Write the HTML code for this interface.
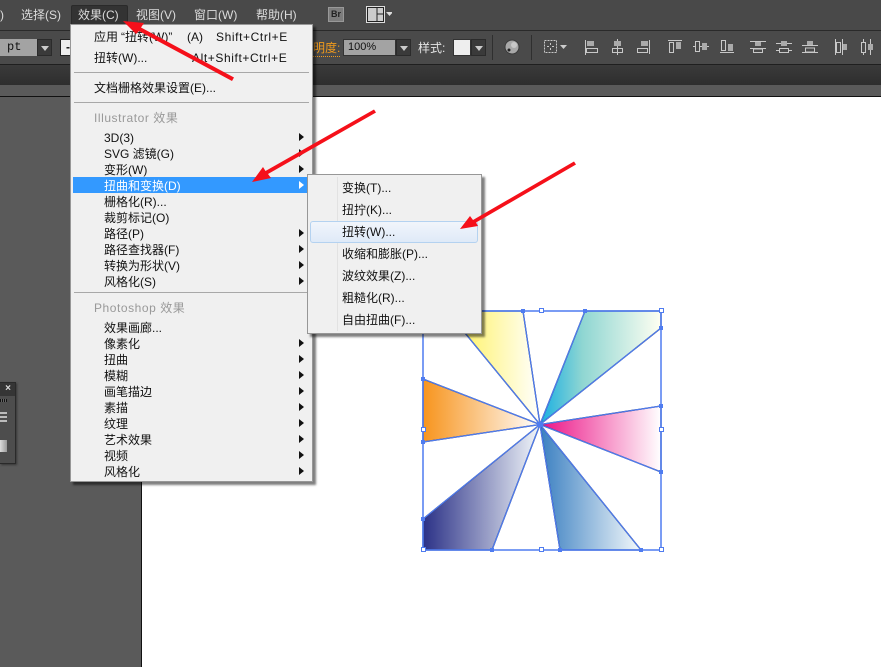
<!DOCTYPE html>
<html>
<head>
<meta charset="utf-8">
<style>
html,body{margin:0;padding:0;width:881px;height:667px;overflow:hidden;background:#5a5a5a}
body{position:relative;font:12px "Liberation Sans","WenQuanYi Zen Hei","Noto Sans CJK SC",sans-serif;color:#111}
div{position:absolute;box-sizing:border-box}
.t{white-space:nowrap;line-height:16px;height:16px}
.mb{color:#dcdcdc;top:7px}
.g{color:#999;letter-spacing:.55px}
.w{letter-spacing:.6px}
.l{color:#e4e4e4}
.sep{left:3px;width:235px;height:1px;background:#a8a8a8}
.ar{left:228px;width:0;height:0;border-left:5px solid #111;border-top:4px solid transparent;border-bottom:4px solid transparent}
.dd{background:#3a3a3a;border:1px solid #2b2b2b}
.dd:after{content:"";position:absolute;left:3px;top:6px;border-left:4px solid transparent;border-right:4px solid transparent;border-top:5px solid #ccc}
</style>
</head>
<body>
<!-- top chrome -->
<div style="left:0;top:0;width:881px;height:30px;background:#494949"></div>
<div style="left:0;top:30px;width:881px;height:1px;background:#2a2a2a"></div>
<div style="left:0;top:31px;width:881px;height:33px;background:#4a4a4a"></div>
<div style="left:0;top:64px;width:881px;height:1px;background:#1f1f1f"></div>
<div style="left:0;top:65px;width:881px;height:20px;background:linear-gradient(#3a3a3a,#2e2e2e)"></div>
<div style="left:0;top:85px;width:881px;height:11px;background:#5a5a5a"></div>
<div style="left:0;top:96px;width:881px;height:1px;background:#111"></div>
<!-- canvas -->
<div style="left:141px;top:97px;width:1px;height:570px;background:#111"></div>
<div style="left:142px;top:97px;width:739px;height:570px;background:#fff"></div>

<!-- menu bar -->
<div class="t mb" style="left:0">)</div>
<div class="t mb" style="left:21px">选择(S)</div>
<div style="left:71px;top:5px;width:57px;height:19px;background:#333;border:1px solid #2a2a2a;border-bottom:0;border-radius:2px 2px 0 0"></div>
<div class="t mb" style="left:78px">效果(C)</div>
<div class="t mb" style="left:136px">视图(V)</div>
<div class="t mb" style="left:194px">窗口(W)</div>
<div class="t mb" style="left:256px">帮助(H)</div>
<div style="left:328px;top:7px;width:16px;height:15px;background:#7d7d7d;border:1px solid #999;color:#222;font:bold 9px/13px 'Liberation Sans',sans-serif;text-align:center">Br</div>
<svg style="position:absolute;left:366px;top:6px" width="26" height="18"><rect x="1.500" y="1.500" width="16" height="14" fill="#ccc" stroke="#222" stroke-width="1"/><rect x="0.500" y="0.500" width="18" height="16" fill="none" stroke="#ddd"/><path d="M11 2v13M11 8h6" stroke="#222"/><path d="M20 6h7l-3.500 4z" fill="#ddd"/></svg>

<!-- control bar -->
<div style="left:0;top:39px;width:37px;height:17px;background:#a3a3a3;font:12px/17px 'Liberation Mono',monospace;color:#111;padding-left:7px">pt</div>
<div class="dd" style="left:37px;top:39px;width:15px;height:17px"></div>
<div style="left:60px;top:39px;width:30px;height:17px;background:#eee;border:1px solid #222;font:bold 12px/14px 'Liberation Sans',sans-serif;padding-left:5px">-</div>
<div class="t" style="left:313px;top:40px;color:#f09a1c;border-bottom:1px dotted #f09a1c;height:17px">明度:</div>
<div style="left:343px;top:39px;width:53px;height:17px;background:#a3a3a3;border:1px solid #333;font:11px/15px 'Liberation Sans',sans-serif;color:#111;padding-left:4px">100%</div>
<div class="dd" style="left:396px;top:39px;width:15px;height:17px"></div>
<div class="t l" style="left:418px;top:40px">样式:</div>
<div style="left:453px;top:39px;width:18px;height:17px;background:#eee;border:1px solid #333"></div>
<div class="dd" style="left:471px;top:39px;width:15px;height:17px"></div>
<div style="left:492px;top:35px;width:1px;height:25px;background:#2f2f2f"></div>
<div style="left:531px;top:35px;width:1px;height:25px;background:#2f2f2f"></div>
<svg style="position:absolute;left:504px;top:39px" width="16" height="16"><circle cx="8" cy="8" r="7" fill="#a8a8a8" stroke="#3a3a3a"/><circle cx="10" cy="6" r="3" fill="#c8c8c8"/><circle cx="5" cy="11" r="1.500" fill="#222"/></svg>
<svg style="position:absolute;left:0;top:0" width="881" height="64" fill="none" stroke="#c8c8c8" stroke-width="1">
<rect x="544.500" y="40.500" width="12" height="12" stroke-dasharray="2 1"/><path d="M550.500 43v7M547 46.500h7" stroke-width="1" stroke-dasharray="2 3"/>
<path d="M560 45h7l-3.500 4z" fill="#ccc" stroke="none"/>
<g>
<path d="M585.500 40v15"/><rect x="587" y="41" width="7" height="5" fill="#aaa" stroke="none"/><rect x="586.500" y="48.500" width="11" height="4"/>
<path d="M617.500 39v16"/><rect x="614" y="41" width="7" height="5" fill="#aaa" stroke="none"/><rect x="612.500" y="48.500" width="10" height="4"/>
<path d="M649.500 40v14"/><rect x="641" y="41" width="7" height="5" fill="#aaa" stroke="none"/><rect x="637.500" y="48.500" width="10" height="4"/>
<path d="M668 40.500h14"/><rect x="669.500" y="42.500" width="4" height="10"/><rect x="676" y="42" width="5" height="7" fill="#aaa" stroke="none"/>
<path d="M693 46.500h16"/><rect x="695.500" y="41.500" width="4" height="10" fill="#4a4a4a"/><rect x="702" y="43" width="5" height="7" fill="#aaa" stroke="none"/>
<path d="M720 52.500h14"/><rect x="721.500" y="40.500" width="4" height="10"/><rect x="728" y="44" width="5" height="7" fill="#aaa" stroke="none"/>
<path d="M750 41.500h16M750 48.500h16"/><rect x="755" y="42" width="6" height="4" fill="#aaa" stroke="none"/><rect x="753.500" y="49" width="9" height="3.500"/>
<path d="M776 43.500h16M776 50.500h16"/><rect x="781" y="41" width="6" height="5" fill="#aaa" stroke="none"/><rect x="779.500" y="48.500" width="9" height="4" fill="#4a4a4a"/>
<path d="M802 45.500h16M802 52.500h16"/><rect x="807" y="41" width="6" height="4" fill="#aaa" stroke="none"/><rect x="805.500" y="48" width="9" height="4"/>
<path d="M835.500 39v16M842.500 39v16"/><rect x="836.500" y="42.500" width="4" height="10"/><rect x="843" y="44" width="4" height="6" fill="#aaa" stroke="none"/>
<path d="M863.500 39v16M870.500 39v16"/><rect x="861.500" y="42.500" width="4" height="10" fill="#4a4a4a"/><rect x="868" y="44" width="5" height="6" fill="#aaa" stroke="none"/>
</g>
</svg>

<!-- left floating panel -->
<div style="left:0;top:382px;width:16px;height:82px;background:#4d4d4d;border:1px solid #2a2a2a;border-left:0;box-shadow:1px 1px 2px rgba(0,0,0,.4)">
<div style="left:0;top:0;width:15px;height:13px;background:#353535;color:#ddd;font:bold 10px/12px 'Liberation Sans',sans-serif;text-align:right;padding-right:4px">×</div>
<div style="left:0;top:16px;width:7px;height:3px;background:repeating-linear-gradient(90deg,#111 0 1px,#666 1px 2px)"></div>
<div style="left:0;top:29px;width:7px;height:2px;background:#bbb"></div>
<div style="left:0;top:33px;width:7px;height:2px;background:#bbb"></div>
<div style="left:0;top:37px;width:7px;height:2px;background:#bbb"></div>
<div style="left:0;top:57px;width:7px;height:12px;background:linear-gradient(90deg,#ddd,#999)"></div>
</div>

<!-- artwork -->
<svg style="position:absolute;left:0;top:0" width="881" height="667">
<defs>
<linearGradient id="y" gradientUnits="userSpaceOnUse" x1="445" y1="0" x2="540" y2="0"><stop offset="0" stop-color="#fff04a"/><stop offset="1" stop-color="#fff"/></linearGradient>
<linearGradient id="c" gradientUnits="userSpaceOnUse" x1="540" y1="0" x2="661" y2="0"><stop offset="0" stop-color="#18aee2"/><stop offset=".35" stop-color="#8fd6d2"/><stop offset="1" stop-color="#fffff2"/></linearGradient>
<linearGradient id="p" gradientUnits="userSpaceOnUse" x1="540" y1="0" x2="661" y2="0"><stop offset="0" stop-color="#ec1185"/><stop offset="1" stop-color="#fff"/></linearGradient>
<linearGradient id="b" gradientUnits="userSpaceOnUse" x1="540" y1="0" x2="641" y2="0"><stop offset="0" stop-color="#3a7fc1"/><stop offset="1" stop-color="#f4f9fb"/></linearGradient>
<linearGradient id="n" gradientUnits="userSpaceOnUse" x1="423" y1="0" x2="540" y2="0"><stop offset="0" stop-color="#2b3187"/><stop offset="1" stop-color="#f2f7fa"/></linearGradient>
<linearGradient id="o" gradientUnits="userSpaceOnUse" x1="423" y1="0" x2="540" y2="0"><stop offset="0" stop-color="#f7941d"/><stop offset="1" stop-color="#fff"/></linearGradient>
</defs>
<g stroke="#1d2b55" stroke-width="1.300">
<polygon points="447,311 523,311 540,424.500" fill="url(#y)"/>
<polygon points="585,311 661,311 661,328 540,424.500" fill="url(#c)"/>
<polygon points="661,406 661,472 540,424.500" fill="url(#p)"/>
<polygon points="560,550 641,550 540,424.500" fill="url(#b)"/>
<polygon points="423,519 423,550 492,550 540,424.500" fill="url(#n)"/>
<polygon points="423,379 423,442 540,424.500" fill="url(#o)"/>
</g>
<g stroke="#4f7cf0" stroke-width="1.200" fill="none">
<polygon points="447,311 523,311 540,424.500"/>
<polygon points="585,311 661,311 661,328 540,424.500"/>
<polygon points="661,406 661,472 540,424.500"/>
<polygon points="560,550 641,550 540,424.500"/>
<polygon points="423,519 423,550 492,550 540,424.500"/>
<polygon points="423,379 423,442 540,424.500"/>
<rect x="423" y="311" width="238" height="239" stroke-width="1.500"/>
</g>
<g fill="#4f7cf0">
<rect x="521" y="309" width="4" height="4"/><rect x="583" y="309" width="4" height="4"/><rect x="659" y="326" width="4" height="4"/>
<rect x="659" y="404" width="4" height="4"/><rect x="659" y="470" width="4" height="4"/><rect x="639" y="548" width="4" height="4"/>
<rect x="558" y="548" width="4" height="4"/><rect x="490" y="548" width="4" height="4"/><rect x="421" y="517" width="4" height="4"/>
<rect x="421" y="377" width="4" height="4"/><rect x="421" y="440" width="4" height="4"/><rect x="537" y="422" width="6" height="5"/>
</g>
<g fill="#fff" stroke="#4f7cf0">
<rect x="539.500" y="308.500" width="4" height="4"/><rect x="659.500" y="308.500" width="4" height="4"/>
<rect x="421.500" y="427.500" width="4" height="4"/><rect x="659.500" y="427.500" width="4" height="4"/>
<rect x="421.500" y="547.500" width="4" height="4"/><rect x="539.500" y="547.500" width="4" height="4"/><rect x="659.500" y="547.500" width="4" height="4"/>
</g>
</svg>

<!-- effect menu -->
<div style="left:70px;top:24px;width:243px;height:458px;background:#f0f0f0;border:1px solid #979797;box-shadow:3px 3px 2px rgba(0,0,0,.5)">
<div class="t" style="left:23px;top:4px">应用</div>
<div class="t" style="left:50px;top:4px">“扭转(W)”</div>
<div class="t" style="left:116px;top:4px">(A)</div>
<div class="t w" style="left:145px;top:4px">Shift+Ctrl+E</div>
<div class="t" style="left:23px;top:25px">扭转(W)...</div>
<div class="t w" style="left:121px;top:25px">Alt+Shift+Ctrl+E</div>
<div class="sep" style="top:47px"></div>
<div class="t" style="left:23px;top:55px">文档栅格效果设置(E)...</div>
<div class="sep" style="top:77px"></div>
<div class="t g" style="left:23px;top:85px">Illustrator 效果</div>
<div class="t" style="left:33px;top:105px">3D(3)</div><div class="ar" style="top:108px"></div>
<div class="t" style="left:33px;top:121px">SVG 滤镜(G)</div><div class="ar" style="top:124px"></div>
<div class="t" style="left:33px;top:137px">变形(W)</div><div class="ar" style="top:140px"></div>
<div style="left:2px;top:152px;width:235px;height:16px;background:#3399ff"></div>
<div class="t" style="left:33px;top:153px;color:#fff">扭曲和变换(D)</div><div class="ar" style="top:156px;border-left-color:#fff"></div>
<div class="t" style="left:33px;top:169px">栅格化(R)...</div>
<div class="t" style="left:33px;top:185px">裁剪标记(O)</div>
<div class="t" style="left:33px;top:201px">路径(P)</div><div class="ar" style="top:204px"></div>
<div class="t" style="left:33px;top:217px">路径查找器(F)</div><div class="ar" style="top:220px"></div>
<div class="t" style="left:33px;top:233px">转换为形状(V)</div><div class="ar" style="top:236px"></div>
<div class="t" style="left:33px;top:249px">风格化(S)</div><div class="ar" style="top:252px"></div>
<div class="sep" style="top:267px"></div>
<div class="t g" style="left:23px;top:275px">Photoshop 效果</div>
<div class="t" style="left:33px;top:295px">效果画廊...</div>
<div class="t" style="left:33px;top:311px">像素化</div><div class="ar" style="top:314px"></div>
<div class="t" style="left:33px;top:327px">扭曲</div><div class="ar" style="top:330px"></div>
<div class="t" style="left:33px;top:343px">模糊</div><div class="ar" style="top:346px"></div>
<div class="t" style="left:33px;top:359px">画笔描边</div><div class="ar" style="top:362px"></div>
<div class="t" style="left:33px;top:375px">素描</div><div class="ar" style="top:378px"></div>
<div class="t" style="left:33px;top:391px">纹理</div><div class="ar" style="top:394px"></div>
<div class="t" style="left:33px;top:407px">艺术效果</div><div class="ar" style="top:410px"></div>
<div class="t" style="left:33px;top:423px">视频</div><div class="ar" style="top:426px"></div>
<div class="t" style="left:33px;top:439px">风格化</div><div class="ar" style="top:442px"></div>
</div>

<!-- submenu -->
<div style="left:307px;top:174px;width:175px;height:160px;background:#f0f0f0;border:1px solid #979797;box-shadow:3px 3px 2px rgba(0,0,0,.5)">
<div style="left:29px;top:2px;width:1px;height:154px;background:#e2e2e2"></div>
<div style="left:2px;top:46px;width:168px;height:22px;background:linear-gradient(#f1f5fb,#dfeaf8);border:1px solid #b4d2f0;border-radius:3px"></div>
<div class="t" style="left:34px;top:5px">变换(T)...</div>
<div class="t" style="left:34px;top:27px">扭拧(K)...</div>
<div class="t" style="left:34px;top:49px">扭转(W)...</div>
<div class="t" style="left:34px;top:71px">收缩和膨胀(P)...</div>
<div class="t" style="left:34px;top:93px">波纹效果(Z)...</div>
<div class="t" style="left:34px;top:115px">粗糙化(R)...</div>
<div class="t" style="left:34px;top:137px">自由扭曲(F)...</div>
</div>

<!-- red arrows -->
<svg style="position:absolute;left:0;top:0" width="881" height="667" fill="#f5101a" stroke="none">
<path d="M234 77.500L141 27.500L144 23L123 21L136 34L139 31L232 81z"/>
<path d="M374 109.500L265.500 171L263 167L252 182L271 178L268 174L376 112.500z"/>
<path d="M574 161.500L473 220L470 216L460 229L478 226L476 222.500L576 164.500z"/>
</svg>
</body>
</html>
